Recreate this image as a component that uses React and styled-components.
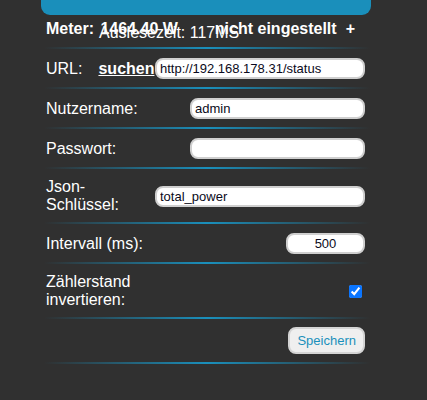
import React from "react";
import styled, { createGlobalStyle } from "styled-components";

const GlobalStyle = createGlobalStyle`
  html, body {
    margin: 0;
    padding: 0;
    background: #303030;
    font-family: "Liberation Sans", Arial, sans-serif;
    color: #fff;
  }
`;

const Page = styled.div`
  width: 330px;
  margin-left: 41px;
`;

const TopBar = styled.div`
  height: 15px;
  background: #1a8fbb;
  border-radius: 0 0 9px 9px;
`;

const Form = styled.div`
  margin: 0 1px 0 3px;
`;

const Row = styled.div`
  display: flex;
  align-items: center;
  min-height: 20px;
  padding: ${(p) => p.$pad || "9px 5px 10px 2px"};
  background: linear-gradient(
      to right,
      rgba(26, 143, 187, 0) 0%,
      #1a8fbb 50%,
      rgba(26, 143, 187, 0) 100%
    )
    bottom / 100% 2px no-repeat;
`;

const Header = styled(Row)`
  position: relative;
  font-weight: bold;
  font-size: 16px;
  line-height: 20px;
`;

const HeaderItem = styled.span`
  margin-left: ${(p) => p.$ml || 0}px;
  white-space: pre;
`;

const ReadTime = styled.span`
  position: absolute;
  left: 55px;
  top: 8px;
  font-weight: normal;
  font-size: 16px;
  white-space: pre;
`;

const Label = styled.div`
  font-size: 16px;
  line-height: 18px;
  width: ${(p) => (p.$w ? `${p.$w}px` : "auto")};
`;

const Link = styled.a`
  font-size: 16px;
  font-weight: bold;
  color: #fff;
  text-decoration: underline;
  margin-left: 16px;
`;

const Field = styled.input`
  box-sizing: border-box;
  width: ${(p) => p.$w}px;
  height: 21px;
  margin-left: auto;
  padding: 0 3px;
  border: 2px solid #cfcfcf;
  border-radius: 8px;
  background: #fff;
  font-family: "Liberation Sans", Arial, sans-serif;
  font-size: 13px;
  color: #0a0a20;
  text-align: ${(p) => (p.$center ? "center" : "left")};
  outline: none;
`;

const Check = styled.input`
  margin: 3px 3px 3px auto;
  width: 13px;
  height: 13px;
  accent-color: #0a75ff;
`;

const SaveButton = styled.button`
  margin-left: auto;
  height: 27px;
  padding: 0 7px;
  border: 2px solid #d4d4d4;
  border-radius: 8px;
  background: #efefef;
  color: #1a8fbb;
  font-family: "Liberation Sans", Arial, sans-serif;
  font-size: 13px;
`;

export default function App() {
  return (
    <>
      <GlobalStyle />
      <Page>
        <TopBar />
        <Form>
          <Header $pad="4px 5px 10px 2px">
            <HeaderItem>Meter: </HeaderItem>
            <HeaderItem $ml={2}>1464.40 W</HeaderItem>
            <HeaderItem $ml={37}>nicht eingestellt</HeaderItem>
            <HeaderItem $ml={9}>+</HeaderItem>
            <ReadTime>Auslesezeit: 117MS</ReadTime>
          </Header>
          <Row>
            <Label>URL:</Label>
            <Link>suchen</Link>
            <Field $w={210} defaultValue="http://192.168.178.31/status" />
          </Row>
          <Row>
            <Label>Nutzername:</Label>
            <Field $w={175} defaultValue="admin" />
          </Row>
          <Row>
            <Label>Passwort:</Label>
            <Field $w={175} type="password" defaultValue="" />
          </Row>
          <Row>
            <Label $w={100}>Json-Schlüssel:</Label>
            <Field $w={210} defaultValue="total_power" />
          </Row>
          <Row>
            <Label>Intervall (ms):</Label>
            <Field $w={79} $center defaultValue="500" />
          </Row>
          <Row>
            <Label $w={100}>Zählerstand invertieren:</Label>
            <Check type="checkbox" defaultChecked />
          </Row>
          <Row $pad="8px 5px 10px 2px">
            <SaveButton>Speichern</SaveButton>
          </Row>
        </Form>
      </Page>
    </>
  );
}
